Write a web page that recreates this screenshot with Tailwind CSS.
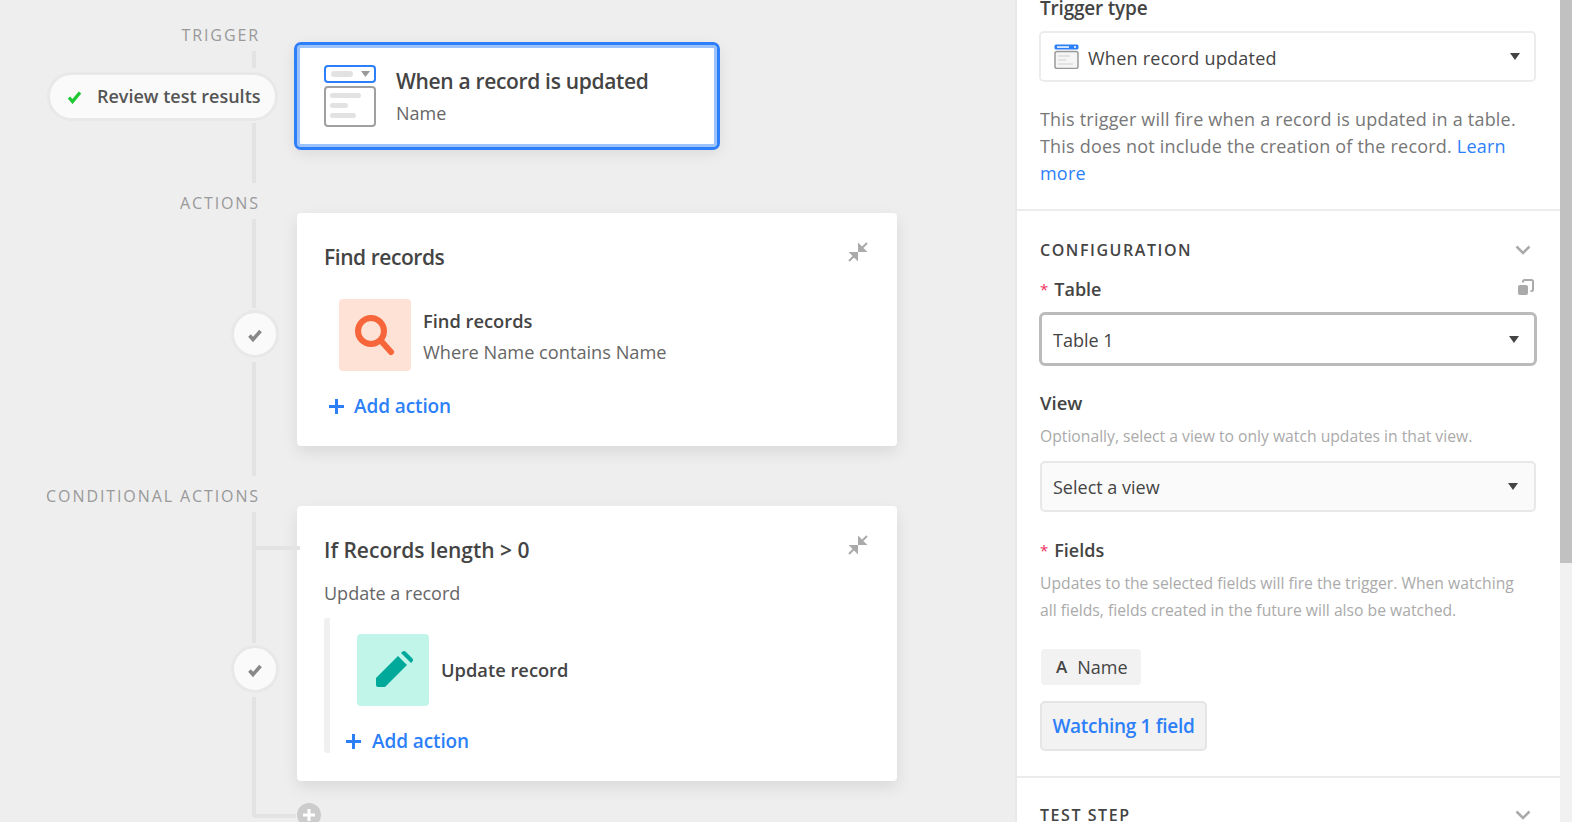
<!DOCTYPE html>
<html lang="en">
<head>
    <meta charset="UTF-8">
    <title>Automation trigger</title>
    <script src="https://cdn.jsdelivr.net/npm/@tailwindcss/browser@4"></script>
</head>
<body class="bg-[#eeeeee]">
<div class="flex h-[822px] w-[1572px] overflow-hidden font-['Open_Sans',sans-serif] text-[#444444]">

    <!-- Timeline gutter -->
    <div class="relative flex w-[297px] shrink-0 flex-col items-end">
        <div class="mt-[25px] mr-[37px] flex h-[20px] items-center text-[16px] tracking-[1.9px] text-[#999999]">TRIGGER</div>
        <div class="mt-[6px] mr-[41px] h-[17px] w-[4px] bg-[#e3e3e3]"></div>
        <div class="mt-[4px] mr-[19px] flex h-[49px] w-[231px] items-center gap-[15px] rounded-full border-[3px] border-[#e8e8e8] bg-[#fafafa] pl-[17px]">
            <svg class="h-[14px] w-[15px]" viewBox="0 0 15 14"><path d="M2 7.500l3.500 4L13 2.500" fill="none" stroke="#20c933" stroke-width="3.400"/></svg>
            <span class="text-[18px] font-semibold whitespace-nowrap text-[#555555]">Review test results</span>
        </div>
        <div class="mt-[2px] mr-[41px] h-[60px] w-[4px] bg-[#e3e3e3]"></div>
        <div class="mt-[10px] mr-[37px] flex h-[20px] items-center text-[16px] tracking-[1.9px] text-[#999999]">ACTIONS</div>
        <div class="mt-[6px] mr-[41px] h-[89px] w-[4px] bg-[#e3e3e3]"></div>
        <div class="mt-[2px] mr-[18px] flex h-[48px] w-[48px] items-center justify-center rounded-full border-[3px] border-[#e8e8e8] bg-[#fafafa]">
            <svg class="mt-[2px] h-[14px] w-[14px]" viewBox="0 0 14 14"><path d="M1.500 7.500l3.500 4L12.500 3" fill="none" stroke="#888888" stroke-width="3.600"/></svg>
        </div>
        <div class="mt-[4px] mr-[41px] h-[114px] w-[4px] bg-[#e3e3e3]"></div>
        <div class="mt-[10px] mr-[37px] flex h-[20px] items-center text-[16px] whitespace-nowrap tracking-[1.9px] text-[#999999]">CONDITIONAL ACTIONS</div>
        <div class="mt-[6px] mr-[41px] h-[131px] w-[4px] bg-[#e3e3e3]"></div>
        <div class="mt-[2px] mr-[18px] flex h-[48px] w-[48px] items-center justify-center rounded-full border-[3px] border-[#e8e8e8] bg-[#fafafa]">
            <svg class="mt-[1px] h-[14px] w-[14px]" viewBox="0 0 14 14"><path d="M1.500 7.500l3.500 4L12.500 3" fill="none" stroke="#888888" stroke-width="3.600"/></svg>
        </div>
        <div class="mt-[4px] mr-[41px] h-[120px] w-[4px] bg-[#e3e3e3]"></div>

        <!-- branches off the line -->
        <div class="absolute top-[546px] left-[254px] z-10 h-[4px] w-[46px] bg-[#e3e3e3]"></div>
        <div class="absolute top-[814px] left-[254px] h-[4px] w-[42px] bg-[#e3e3e3]"></div>
        <div class="absolute top-[803px] left-[297px] z-10 flex h-[24px] w-[24px] items-center justify-center rounded-full bg-[#cccccc]">
            <svg class="h-[16px] w-[16px]" viewBox="0 0 16 16"><path d="M8 2v12M2 8h12" stroke="#ffffff" stroke-width="3"/></svg>
        </div>
    </div>

    <!-- Cards -->
    <div class="flex w-[718px] shrink-0 flex-col items-start">
        <div class="mt-[42px] ml-[-3px] flex h-[108px] w-[426px] items-center gap-[20px] rounded-[7px] border-[3px] border-[#2d7ff9] bg-white pl-[27px] shadow-[inset_0_0_0_3px_#9cc2fb,0_4px_14px_rgba(0,0,0,0.08)]">
            <svg class="h-[62px] w-[52px] shrink-0" viewBox="0 0 52 62">
                <rect x="1" y="1" width="50" height="16" rx="3" fill="#fff" stroke="#2d7ff9" stroke-width="2"/>
                <rect x="7" y="6" width="22" height="6" rx="3" fill="#e2e2e2"/>
                <path d="M37 6h9l-4.500 6z" fill="#999999"/>
                <rect x="1" y="22" width="50" height="39" rx="3" fill="#fff" stroke="#a0a0a0" stroke-width="2"/>
                <rect x="6" y="28" width="31" height="5" rx="2.500" fill="#e2e2e2"/>
                <rect x="6" y="38" width="18" height="5" rx="2.500" fill="#e2e2e2"/>
                <rect x="6" y="48" width="26" height="5" rx="2.500" fill="#e2e2e2"/>
            </svg>
            <div>
                <div class="text-[21px] leading-[28px] font-semibold tracking-[-0.33px] whitespace-nowrap">When a record is updated</div>
                <div class="mt-[6px] text-[18px] leading-[24px] text-[#666666]">Name</div>
            </div>
        </div>

        <div class="mt-[63px] flex h-[233px] w-[600px] flex-col rounded-[4px] bg-white shadow-[0_6px_16px_rgba(0,0,0,0.09)]">
            <div class="flex items-start justify-between pt-[30px] pr-[29px] pl-[27px]">
                <span class="text-[21px] leading-[28px] font-semibold tracking-[-0.45px]">Find records</span>
                <svg class="mt-[-1px] h-[20px] w-[20px]" viewBox="0 0 20 20"><path d="M11 9V3l6 6zM14 6l5-5M9 11v6l-6-6zM6 14l-5 5" fill="#aaaaaa" stroke="#aaaaaa" stroke-width="2"/></svg>
            </div>
            <div class="mt-[28px] ml-[42px] flex items-center gap-[12px]">
                <div class="flex h-[72px] w-[72px] items-center justify-center rounded-[4px] bg-[#fee2d5]">
                    <svg class="h-[72px] w-[72px]" viewBox="0 0 72 72"><circle cx="32" cy="32" r="13" fill="none" stroke="#f7653b" stroke-width="6"/><path d="M43 43l9 10" stroke="#f7653b" stroke-width="6" stroke-linecap="round"/></svg>
                </div>
                <div class="pt-[2px]">
                    <div class="text-[18.300px] leading-[26px] font-semibold">Find records</div>
                    <div class="mt-[5px] text-[18.200px] leading-[26px] text-[#666666]">Where Name contains Name</div>
                </div>
            </div>
            <div class="mt-[22px] ml-[31px] flex items-center gap-[9px] text-[#2d7ff9]">
                <svg class="h-[17px] w-[17px]" viewBox="0 0 17 17"><path d="M8.500 1v15M1 8.500h15" stroke="#2d7ff9" stroke-width="3"/></svg>
                <span class="text-[19px] leading-[26px] font-semibold tracking-[-0.1px]">Add action</span>
            </div>
        </div>

        <div class="mt-[60px] flex h-[275px] w-[600px] flex-col rounded-[4px] bg-white shadow-[0_6px_16px_rgba(0,0,0,0.09)]">
            <div class="flex items-start justify-between pt-[30px] pr-[29px] pl-[27px]">
                <span class="text-[21px] leading-[28px] font-semibold">If Records length &gt; 0</span>
                <svg class="mt-[-1px] h-[20px] w-[20px]" viewBox="0 0 20 20"><path d="M11 9V3l6 6zM14 6l5-5M9 11v6l-6-6zM6 14l-5 5" fill="#aaaaaa" stroke="#aaaaaa" stroke-width="2"/></svg>
            </div>
            <div class="mt-[16px] pl-[27px] text-[18px] leading-[26px] text-[#666666]">Update a record</div>
            <div class="mt-[12px] ml-[27px] h-[135px] rounded-[3px] border-l-[6px] border-[#f0f0f0] pt-[16px] pl-[27px]">
                <div class="flex items-center gap-[12px]">
                    <div class="flex h-[72px] w-[72px] items-center justify-center rounded-[4px] bg-[#c2f5e9]">
                        <svg class="h-[72px] w-[72px]" viewBox="0 0 72 72"><path d="M19 44L41 22l9 9-22 22h-7q-2 0-2-2z" fill="#00a99a"/><path d="M44 19l1-1q2-2 4 0l6 6q2 2 0 4l-1 1z" fill="#00a99a"/></svg>
                    </div>
                    <span class="text-[18.300px] font-semibold">Update record</span>
                </div>
                <div class="mt-[22px] ml-[-12px] flex items-center gap-[10px] text-[#2d7ff9]">
                    <svg class="h-[17px] w-[17px]" viewBox="0 0 17 17"><path d="M8.500 1v15M1 8.500h15" stroke="#2d7ff9" stroke-width="3"/></svg>
                    <span class="text-[19px] leading-[26px] font-semibold tracking-[-0.1px]">Add action</span>
                </div>
            </div>
        </div>
    </div>

    <!-- Config panel -->
    <div class="h-full w-[545px] shrink-0 border-l-2 border-[#e8e8e8] bg-white">
        <div class="mt-[-5px] h-[216px] border-b-2 border-[#ececec] pr-[24px] pl-[23px]">
            <div class="text-[19px] leading-[26px] font-semibold tracking-[-0.2px]">Trigger type</div>
            <div class="mt-[10px] ml-[-1px] flex h-[51px] items-center rounded-[5px] border-2 border-[#ececec] pr-[14px] pl-[13px]">
                <svg class="h-[25px] w-[25px] shrink-0" viewBox="0 0 25 25">
                    <rect x="0.500" y="0.500" width="24" height="5" rx="1.500" fill="#2d7ff9"/>
                    <rect x="3" y="2.300" width="12" height="1.500" fill="#fff"/>
                    <rect x="20" y="2" width="2" height="2" fill="#cfe1fd"/>
                    <rect x="1" y="7.500" width="23" height="17" rx="2" fill="#f5f5f5" stroke="#999999" stroke-width="1.500"/>
                    <path d="M4 11h12v2H4zM4 15h8v2H4zM4 19h15v2H4z" fill="#e2e2e2"/>
                </svg>
                <span class="ml-[9px] pt-[3px] text-[18px] tracking-[0.25px]">When record updated</span>
                <svg class="ml-auto h-[7px] w-[10px]" viewBox="0 0 10 7"><path d="M0 0h10L5 7z" fill="#444444"/></svg>
            </div>
            <p class="mt-[24px] text-[18px] leading-[27px] tracking-[0.2px] text-[#777777]">This trigger will fire when a record is updated in a table. This does not include the creation of the record. <span class="text-[#2d7ff9]">Learn more</span></p>
        </div>

        <div class="h-[567px] border-b-2 border-[#ececec] pt-[27px] pr-[24px] pl-[23px]">
            <div class="flex h-[24px] items-center justify-between">
                <span class="text-[16px] font-semibold tracking-[1.55px]">CONFIGURATION</span>
                <svg class="mr-[5px] h-[10px] w-[16px]" viewBox="0 0 16 10"><path d="M1.500 1.500L8 8l6.500-6.500" fill="none" stroke="#aaaaaa" stroke-width="2.500"/></svg>
            </div>
            <div class="mt-[15px] flex h-[24px] items-center justify-between">
                <div class="flex items-center gap-[6px]"><span class="text-[15px] text-[#ef3061]">*</span><span class="text-[18px] font-semibold">Table</span></div>
                <svg class="mt-[-4px] mr-[2px] h-[16px] w-[16px]" viewBox="0 0 16 16"><rect x="0" y="6" width="10" height="10" rx="2" fill="#aaaaaa"/><path d="M5 3.500V2.500q0-1.500 1.500-1.500h7q1.500 0 1.500 1.500v8q0 1.500-1.500 1.500h-1" fill="none" stroke="#aaaaaa" stroke-width="2"/></svg>
            </div>
            <div class="mt-[11px] mx-[-1px] flex h-[54px] items-center justify-between rounded-[6px] border-[3px] border-[#bbbbbb] pr-[15px] pl-[11px]">
                <span class="pt-[2px] text-[18px]">Table 1</span>
                <svg class="h-[7px] w-[10px]" viewBox="0 0 10 7"><path d="M0 0h10L5 7z" fill="#444444"/></svg>
            </div>
            <div class="mt-[25px] h-[24px] text-[18.500px] leading-[24px] font-semibold">View</div>
            <div class="mt-[9px] text-[15.700px] leading-[24px] text-[#aaaaaa]">Optionally, select a view to only watch updates in that view.</div>
            <div class="mt-[13px] flex h-[51px] items-center justify-between rounded-[5px] border-2 border-[#e8e8e8] bg-[#fafafa] pr-[16px] pl-[11px]">
                <span class="pt-[2px] text-[18px]">Select a view</span>
                <svg class="h-[7px] w-[10px]" viewBox="0 0 10 7"><path d="M0 0h10L5 7z" fill="#444444"/></svg>
            </div>
            <div class="mt-[26px] flex h-[24px] items-center gap-[6px]"><span class="text-[15px] text-[#ef3061]">*</span><span class="text-[18px] font-semibold">Fields</span></div>
            <p class="mt-[8px] max-w-[480px] text-[15.700px] leading-[27px] text-[#aaaaaa]">Updates to the selected fields will fire the trigger. When watching all fields, fields created in the future will also be watched.</p>
            <div class="mt-[25px] ml-[1px] flex h-[36px] w-[100px] items-center gap-[10px] rounded-[4px] bg-[#f2f2f2] pl-[15px]">
                <span class="text-[17px] font-semibold">A</span><span class="text-[18px]">Name</span>
            </div>
            <div class="mt-[16px] flex h-[50px] w-[167px] items-center justify-center rounded-[5px] border-2 border-[#e5e5e5] bg-[#f2f2f2] text-[19px] font-semibold tracking-[-0.3px] text-[#2d7ff9]">Watching 1 field</div>
        </div>

        <div class="pt-[25px] pr-[29px] pl-[23px]">
            <div class="flex h-[24px] items-center justify-between">
                <span class="text-[16px] font-semibold tracking-[1.55px]">TEST STEP</span>
                <svg class="h-[10px] w-[16px]" viewBox="0 0 16 10"><path d="M1.500 1.500L8 8l6.500-6.500" fill="none" stroke="#aaaaaa" stroke-width="2.500"/></svg>
            </div>
        </div>
    </div>

    <!-- Scrollbar -->
    <div class="h-full w-[12px] shrink-0 bg-[#f1f1f1]">
        <div class="h-[563px] bg-[#c1c1c1]"></div>
    </div>
</div>
</body>
</html>
